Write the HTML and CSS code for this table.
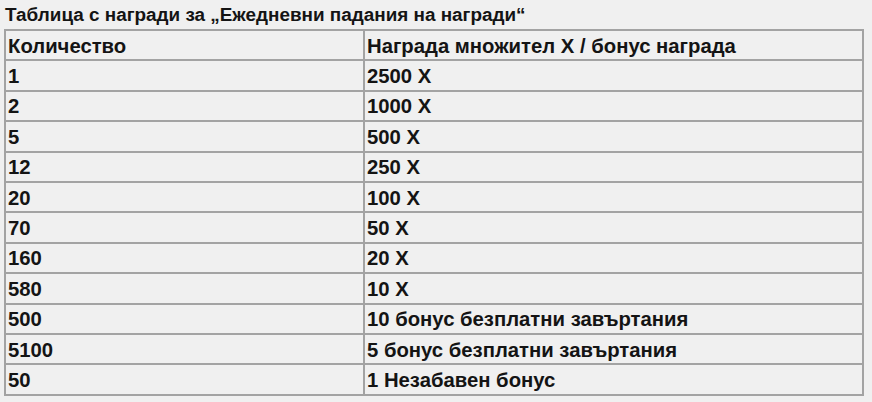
FILE: index.html
```html
<!DOCTYPE html>
<html lang="bg">
<head>
<meta charset="utf-8">
<link rel="stylesheet" href="styles.css">
</head>
<body>
<div class="page">
  <div class="title">Таблица с награди за „Ежедневни падания на награди“</div>
  <table class="prizes">
    <tr><td class="c1">Количество</td><td class="c2">Награда множител X / бонус награда</td></tr>
    <tr><td class="c1">1</td><td class="c2">2500 X</td></tr>
    <tr><td class="c1">2</td><td class="c2">1000 X</td></tr>
    <tr><td class="c1">5</td><td class="c2">500 X</td></tr>
    <tr><td class="c1">12</td><td class="c2">250 X</td></tr>
    <tr><td class="c1">20</td><td class="c2">100 X</td></tr>
    <tr><td class="c1">70</td><td class="c2">50 X</td></tr>
    <tr><td class="c1">160</td><td class="c2">20 X</td></tr>
    <tr><td class="c1">580</td><td class="c2">10 X</td></tr>
    <tr><td class="c1">500</td><td class="c2">10 бонус безплатни завъртания</td></tr>
    <tr><td class="c1">5100</td><td class="c2">5 бонус безплатни завъртания</td></tr>
    <tr><td class="c1">50</td><td class="c2">1 Незабавен бонус</td></tr>
  </table>
</div>
</body>
</html>
```
FILE: styles.css
```css
html, body {
  margin: 0;
  padding: 0;
  background: #f0f0f0;
}
.page {
  padding: 0 0 0 4px;
  font-family: "Liberation Sans", Arial, sans-serif;
  font-weight: bold;
  color: #141414;
}
.title {
  height: 29px;
  line-height: 30px;
  padding-left: 1px;
  font-size: 18.9px;
}
.prizes {
  border-collapse: collapse;
  width: 860px;
  border: 2px solid #a3a3a3;
  font-size: 20.3px;
}
.prizes td {
  border: 2px solid #a3a3a3;
  height: 27.4px;
  padding: 1px 2px 0 2px;
  vertical-align: middle;
  text-align: left;
  line-height: 22px;
}
.prizes .c1 {
  width: 353px;
}
```
